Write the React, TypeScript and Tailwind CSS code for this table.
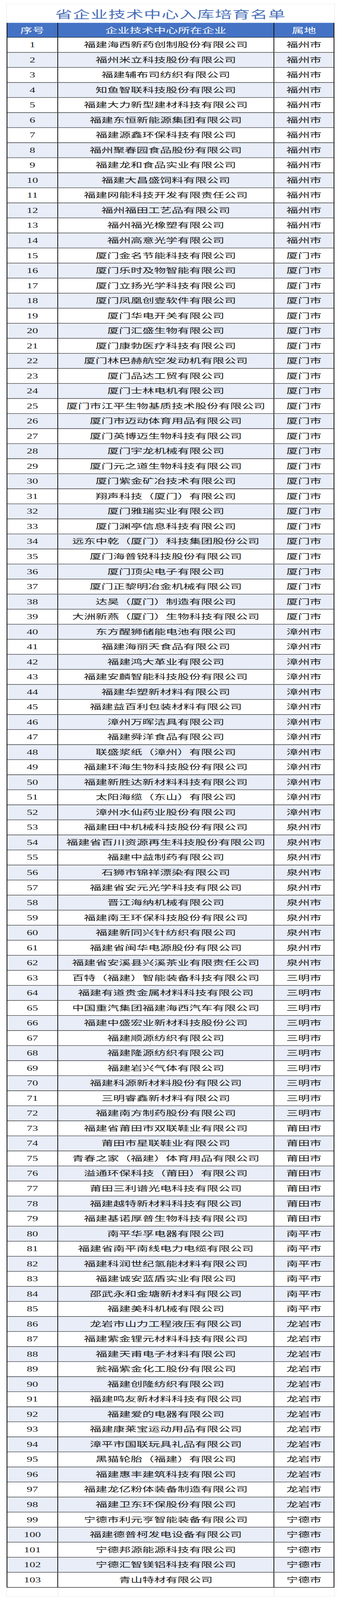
const rows: [string, string][] = [
  ['福建海西新药创制股份有限公司', '福州市'],
  ['福州米立科技股份有限公司', '福州市'],
  ['福建辅布司纺织有限公司', '福州市'],
  ['知鱼智联科技股份有限公司', '福州市'],
  ['福建大力新型建材科技有限公司', '福州市'],
  ['福建东恒新能源集团有限公司', '福州市'],
  ['福建源鑫环保科技有限公司', '福州市'],
  ['福州聚春园食品股份有限公司', '福州市'],
  ['福建龙和食品实业有限公司', '福州市'],
  ['福建大昌盛饲料有限公司', '福州市'],
  ['福建网能科技开发有限责任公司', '福州市'],
  ['福州福田工艺品有限公司', '福州市'],
  ['福州福光橡塑有限公司', '福州市'],
  ['福州高意光学有限公司', '福州市'],
  ['厦门金名节能科技有限公司', '厦门市'],
  ['厦门乐时及物智能有限公司', '厦门市'],
  ['厦门立扬光学科技有限公司', '厦门市'],
  ['厦门凤凰创壹软件有限公司', '厦门市'],
  ['厦门华电开关有限公司', '厦门市'],
  ['厦门汇盛生物有限公司', '厦门市'],
  ['厦门康勃医疗科技有限公司', '厦门市'],
  ['厦门林巴赫航空发动机有限公司', '厦门市'],
  ['厦门品达工贸有限公司', '厦门市'],
  ['厦门士林电机有限公司', '厦门市'],
  ['厦门市江平生物基质技术股份有限公司', '厦门市'],
  ['厦门市迈动体育用品有限公司', '厦门市'],
  ['厦门英博迈生物科技有限公司', '厦门市'],
  ['厦门宇龙机械有限公司', '厦门市'],
  ['厦门元之道生物科技有限公司', '厦门市'],
  ['厦门紫金矿冶技术有限公司', '厦门市'],
  ['翔声科技（厦门）有限公司', '厦门市'],
  ['厦门雅瑞实业有限公司', '厦门市'],
  ['厦门渊亭信息科技有限公司', '厦门市'],
  ['远东中乾（厦门）科技集团股份公司', '厦门市'],
  ['厦门海普锐科技股份有限公司', '厦门市'],
  ['厦门顶尖电子有限公司', '厦门市'],
  ['厦门正黎明冶金机械有限公司', '厦门市'],
  ['达昊（厦门）制造有限公司', '厦门市'],
  ['大洲新燕（厦门）生物科技有限公司', '厦门市'],
  ['东方醒狮储能电池有限公司', '漳州市'],
  ['福建海丽天食品有限公司', '漳州市'],
  ['福建鸿大革业有限公司', '漳州市'],
  ['福建安麟智能科技股份有限公司', '漳州市'],
  ['福建华塑新材料有限公司', '漳州市'],
  ['福建益百利包装材料有限公司', '漳州市'],
  ['漳州万晖洁具有限公司', '漳州市'],
  ['福建舜洋食品有限公司', '漳州市'],
  ['联盛浆纸（漳州）有限公司', '漳州市'],
  ['福建环海生物科技股份有限公司', '漳州市'],
  ['福建新胜达新材料科技有限公司', '漳州市'],
  ['太阳海缆（东山）有限公司', '漳州市'],
  ['漳州水仙药业股份有限公司', '漳州市'],
  ['福建田中机械科技股份有限公司', '泉州市'],
  ['福建省百川资源再生科技股份有限公司', '泉州市'],
  ['福建中益制药有限公司', '泉州市'],
  ['石狮市锦祥漂染有限公司', '泉州市'],
  ['福建省安元光学科技有限公司', '泉州市'],
  ['晋江海纳机械有限公司', '泉州市'],
  ['福建南王环保科技股份有限公司', '泉州市'],
  ['福建新同兴针纺织有限公司', '泉州市'],
  ['福建省闽华电源股份有限公司', '泉州市'],
  ['福建省安溪县兴溪茶业有限责任公司', '泉州市'],
  ['百特（福建）智能装备科技有限公司', '三明市'],
  ['福建有道贵金属材料科技有限公司', '三明市'],
  ['中国重汽集团福建海西汽车有限公司', '三明市'],
  ['福建中盛宏业新材科技股份公司', '三明市'],
  ['福建顺源纺织有限公司', '三明市'],
  ['福建隆源纺织有限公司', '三明市'],
  ['福建岩兴气体有限公司', '三明市'],
  ['福建科源新材料股份有限公司', '三明市'],
  ['三明睿鑫新材料有限公司', '三明市'],
  ['福建南方制药股份有限公司', '三明市'],
  ['福建省莆田市双联鞋业有限公司', '莆田市'],
  ['莆田市星联鞋业有限公司', '莆田市'],
  ['青春之家（福建）体育用品有限公司', '莆田市'],
  ['溢通环保科技（莆田）有限公司', '莆田市'],
  ['莆田三利谱光电科技有限公司', '莆田市'],
  ['福建越特新材料科技有限公司', '莆田市'],
  ['福建基诺厚普生物科技有限公司', '莆田市'],
  ['南平华孚电器有限公司', '南平市'],
  ['福建省南平南线电力电缆有限公司', '南平市'],
  ['福建科润世纪氢能材料有限公司', '南平市'],
  ['福建诚安蓝盾实业有限公司', '南平市'],
  ['邵武永和金塘新材料有限公司', '南平市'],
  ['福建美科机械有限公司', '南平市'],
  ['龙岩市山力工程液压有限公司', '龙岩市'],
  ['福建紫金锂元材料科技有限公司', '龙岩市'],
  ['福建天甫电子材料有限公司', '龙岩市'],
  ['瓮福紫金化工股份有限公司', '龙岩市'],
  ['福建创隆纺织有限公司', '龙岩市'],
  ['福建鸣友新材料科技有限公司', '龙岩市'],
  ['福建爱的电器有限公司', '龙岩市'],
  ['福建康莱宝运动用品有限公司', '龙岩市'],
  ['漳平市国联玩具礼品有限公司', '龙岩市'],
  ['黑猫轮胎（福建）有限公司', '龙岩市'],
  ['福建惠丰建筑科技有限公司', '龙岩市'],
  ['福建龙亿粉体装备制造有限公司', '龙岩市'],
  ['福建卫东环保股份有限公司', '龙岩市'],
  ['宁德市利元亨智能装备有限公司', '宁德市'],
  ['福建德普柯发电设备有限公司', '宁德市'],
  ['宁德邦源能源科技有限公司', '宁德市'],
  ['宁德汇智镁铝科技有限公司', '宁德市'],
  ['青山特材有限公司', '宁德市'],
];

const PAGE_H = 6592;
const font = "font-['Liberation_Serif','Noto_Sans_CJK_SC',serif]";

export default function App() {
  // the browser may hand us a shorter window than the sheet; squeeze to fit it
  const fit = Math.min(1, window.innerHeight / PAGE_H);

  return (
    <div className="w-[874px] overflow-hidden bg-white" style={{ height: PAGE_H * fit }}>
      <div className="origin-top h-[6592px] px-4 pt-4" style={{ transform: `scaleY(${fit})` }}>
        <div className="border border-[#e4e4e4] border-b-0">
          <div className="h-[77px] flex items-center justify-center">
            <h1 className="text-[44px] leading-none tracking-[1.5px] text-[#4a70b8] font-['Noto_Sans_CJK_SC',sans-serif]">
              省企业技术中心入库培育名单
            </h1>
          </div>

          <div className="border-l-2 border-r-2 border-[#111]">
            <div className="grid grid-cols-[130px_554px_152px] h-[61px] bg-[#4472c4] text-white border-b-2 border-[#111] font-['Noto_Sans_CJK_SC',sans-serif] text-[31px] leading-none">
              <div className="flex items-center justify-center border-r-2 border-[#111]">序号</div>
              <div className="flex items-center justify-center border-r-2 border-[#111]">企业技术中心所在企业</div>
              <div className="flex items-center justify-center">属地</div>
            </div>

            {rows.map(([name, city], i) => (
              <div
                key={i}
                className={`grid grid-cols-[130px_554px_152px] h-[62px] border-b-2 border-[#111] text-[30px] leading-none text-[#1a1a1a] ${font} ${
                  i % 2 === 1 ? 'bg-[#e8edf8]' : 'bg-white'
                }`}
              >
                <div className="flex items-center justify-center border-r-2 border-[#111] text-[29px]">{i + 1}</div>
                <div className="flex items-center justify-center border-r-2 border-[#111] whitespace-nowrap">{name}</div>
                <div className="flex items-center justify-center">{city}</div>
              </div>
            ))}
          </div>

          <div className="grid grid-cols-[132px_554px_154px] h-[36px] border-b border-[#e4e4e4]">
            <div className="border-r border-[#e4e4e4]" />
            <div className="border-r border-[#e4e4e4]" />
            <div />
          </div>
        </div>
      </div>
    </div>
  );
}
